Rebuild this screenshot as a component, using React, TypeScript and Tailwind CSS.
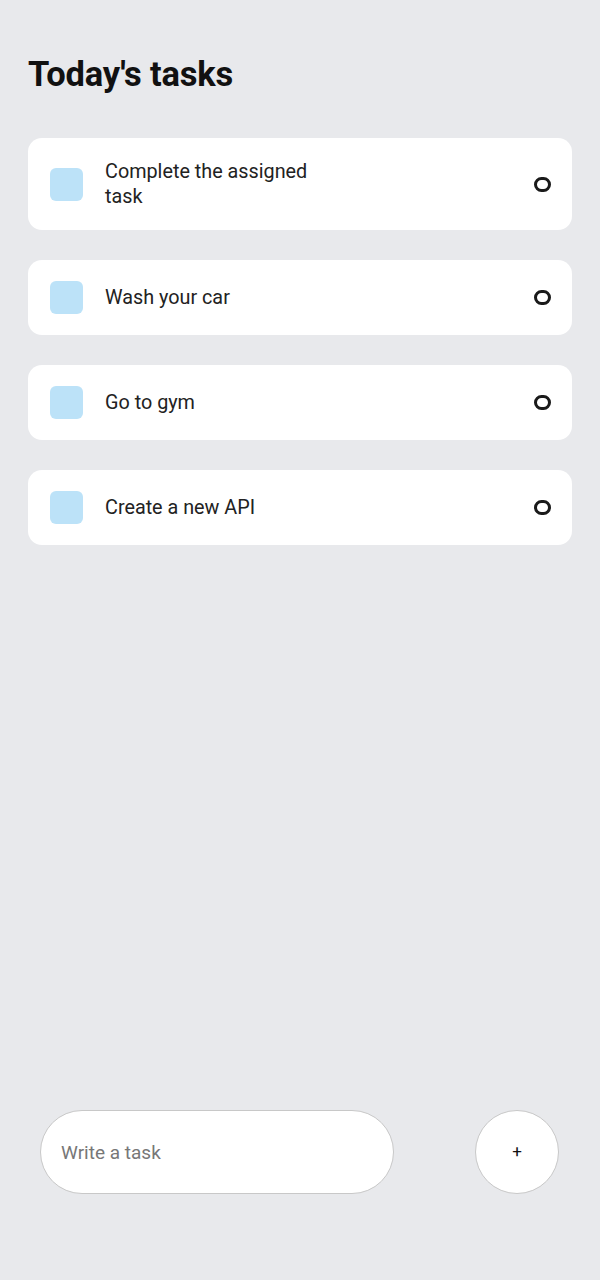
import { useState } from 'react';

const tasks = ['Complete the assigned task', 'Wash your car', 'Go to gym', 'Create a new API'];

function Task({ text }: { text: string }) {
  return (
    <div className="flex items-center justify-between rounded-[14px] bg-white px-[22px] py-[21px]">
      <div className="flex items-center">
        <div className="h-[33px] w-[33px] shrink-0 rounded-[6px] bg-[#bce2f8]" />
        <p className="ml-[22px] max-w-[230px] text-[19.8px] leading-[25px] text-[#222]">{text}</p>
      </div>
      <div className="mr-[-1px] h-[15px] w-[17px] rounded-full border-[3px] border-[#1a1a1a]" />
    </div>
  );
}

export default function App() {
  const [value, setValue] = useState('');
  return (
    <div
      className="flex min-h-[1280px] flex-col bg-[#e8e9ec]"
      style={{ fontFamily: 'Roboto, "Noto Sans", sans-serif' }}
    >
      <div className="px-[28px] pt-[52px]">
        <h1 className="text-[34.5px] font-bold leading-[44px] tracking-[-0.2px] text-[#111]">Today's tasks</h1>
        <div className="mt-[42px] flex flex-col gap-[30px]">
          {tasks.map((t) => (
            <Task key={t} text={t} />
          ))}
        </div>
      </div>

      <div className="mt-auto mb-[86px] flex items-center justify-between pl-[40px] pr-[41px]">
        <input
          value={value}
          onChange={(e) => setValue(e.target.value)}
          placeholder="Write a task"
          className="h-[84px] w-[354px] rounded-full border border-[#c8c8c8] bg-white px-[20px] text-[19px] text-[#222] outline-none placeholder:text-[#777]"
        />
        <button
          type="button"
          className="flex h-[84px] w-[84px] items-center justify-center rounded-full border border-[#c8c8c8] bg-white text-[17px] text-[#111]"
        >
          +
        </button>
      </div>
    </div>
  );
}
